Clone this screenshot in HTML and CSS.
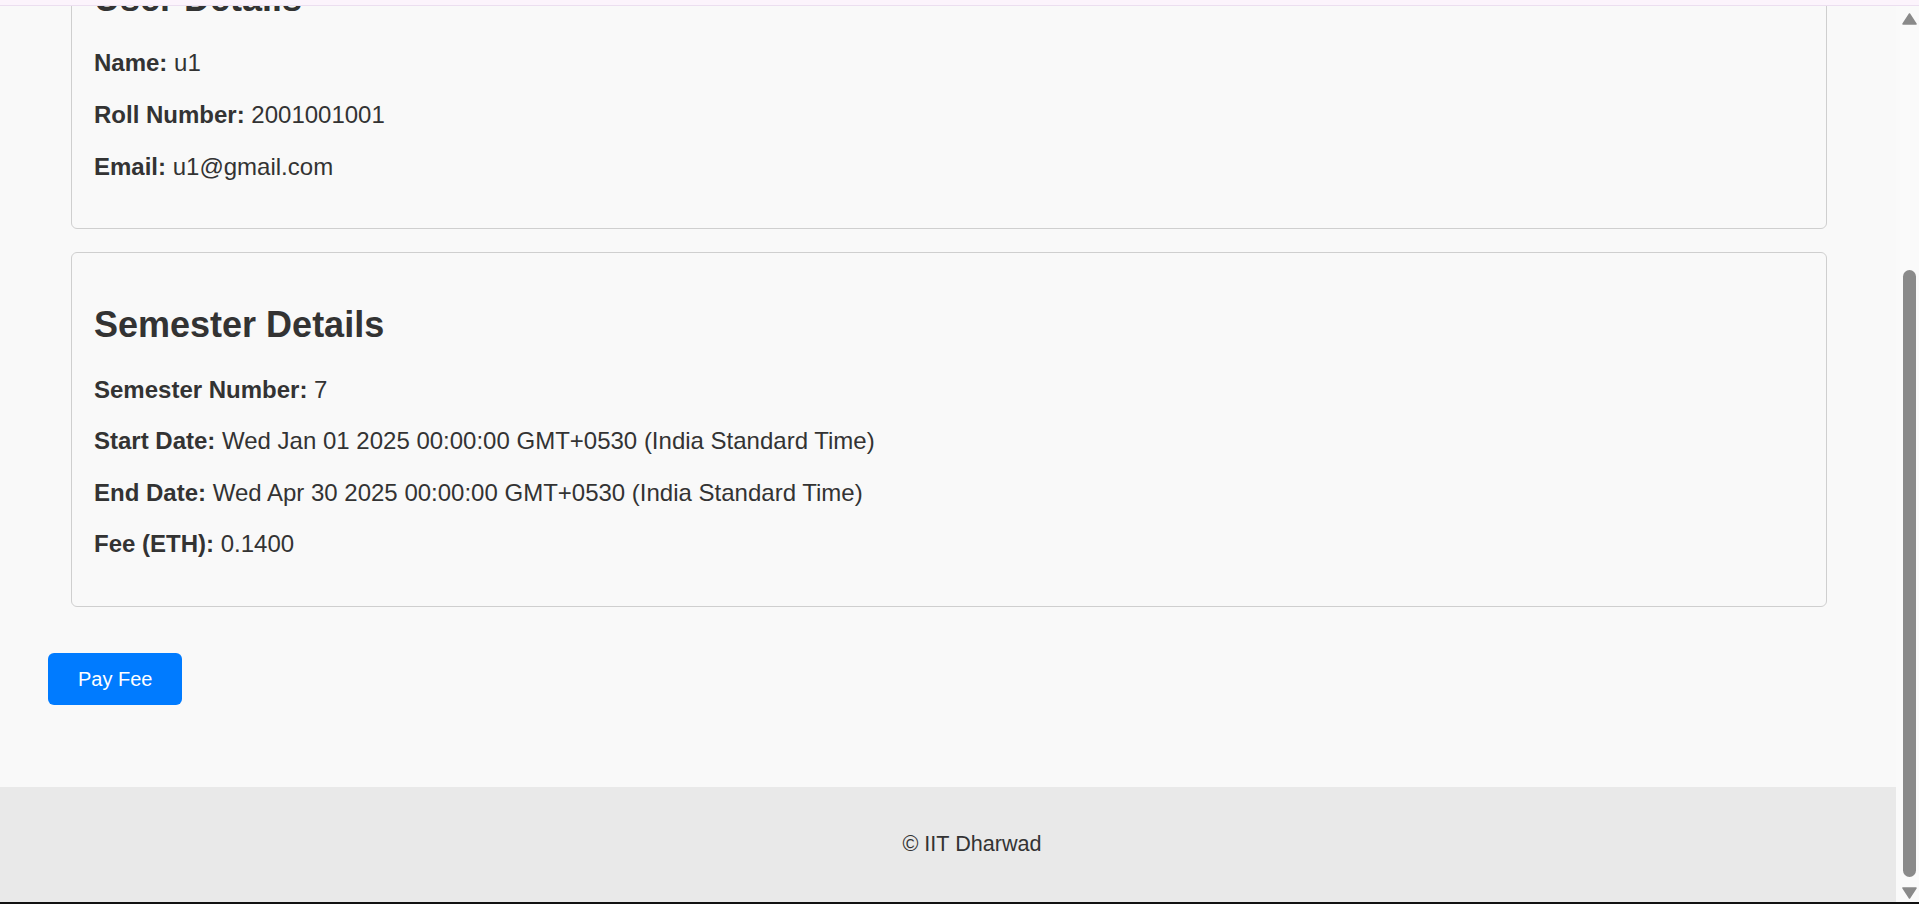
FILE: index.html
```html
<!DOCTYPE html>
<html lang="en">
<head>
<meta charset="utf-8">
<title>Student Fee Payment</title>
<link rel="stylesheet" href="styles.css">
</head>
<body>
  <div class="window">
    <div class="page">
      <main class="main">
        <section class="card card-first">
          <h2 class="card-title">User Details</h2>
          <p class="field"><strong>Name:</strong> u1</p>
          <p class="field"><strong>Roll Number:</strong> 2001001001</p>
          <p class="field"><strong>Email:</strong> u1@gmail.com</p>
        </section>
        <section class="card">
          <h2 class="card-title">Semester Details</h2>
          <p class="field"><strong>Semester Number:</strong> 7</p>
          <p class="field"><strong>Start Date:</strong> Wed Jan 01 2025 00:00:00 GMT+0530 (India Standard Time)</p>
          <p class="field"><strong>End Date:</strong> Wed Apr 30 2025 00:00:00 GMT+0530 (India Standard Time)</p>
          <p class="field"><strong>Fee (ETH):</strong> 0.1400</p>
        </section>
        <div class="actions">
          <button class="pay-btn" type="button">Pay Fee</button>
        </div>
      </main>
      <footer class="footer">
        <p class="footer-text">© IIT Dharwad</p>
      </footer>
    </div>
    <div class="scrollbar">
      <svg class="arrow" width="15" height="12" viewBox="0 0 15 12"><path d="M7.5 1 L14 11 L1 11 Z" fill="#8a8a8a" stroke="#8a8a8a" stroke-width="1.5" stroke-linejoin="round"/></svg>
      <div class="thumb"></div>
      <svg class="arrow arrow-down" width="15" height="12" viewBox="0 0 15 12"><path d="M1 1 L14 1 L7.5 11 Z" fill="#8a8a8a" stroke="#8a8a8a" stroke-width="1.5" stroke-linejoin="round"/></svg>
    </div>
  </div>
  <div class="topbar"></div>
  <div class="bottom-edge"></div>
</body>
</html>
```

FILE: styles.css
```css
* { box-sizing: border-box; }

html, body {
  margin: 0;
  padding: 0;
  height: 904px;
  overflow: hidden;
}

body {
  background: #f9f9f9;
  color: #333333;
  font-family: "Liberation Sans", Arial, sans-serif;
  display: flex;
  flex-direction: column;
  position: relative;
}

.topbar {
  position: absolute;
  top: 0;
  left: 0;
  right: 0;
  height: 6px;
  background: #fcf4fc;
  border-bottom: 1px solid #ecdff0;
}

.window {
  display: flex;
  height: 902px;
  overflow: hidden;
}

.page {
  flex: 0 0 1896px;
  display: flex;
  flex-direction: column;
  overflow: hidden;
}

.main {
  padding: 0 48px;
  margin-top: -74px;
}

.card {
  background: #f9f9f9;
  border: 1px solid #cfcfcf;
  border-radius: 6px;
  padding: 24px 22px;
  margin: 0 21px 23px 23px;
}

.card-title {
  font-size: 36px;
  font-weight: bold;
  margin: 27px 0 30px;
  line-height: 41.4px;
}

.field {
  font-size: 24px;
  margin: 24px 0;
  line-height: 27.6px;
}

.field:first-of-type { margin-top: 0; }

.field strong { font-weight: bold; }

.actions {
  margin-top: 46px;
  margin-bottom: 82px;
}

.pay-btn {
  background: #007bff;
  color: #ffffff;
  border: none;
  border-radius: 6px;
  font-family: "Liberation Sans", Arial, sans-serif;
  font-size: 20px;
  line-height: 22px;
  padding: 15px 30px;
  cursor: pointer;
}

.footer {
  background: #e9e9e9;
  padding: 45px 0 45px 48px;
  text-align: center;
  flex: 0 0 auto;
}

.footer-text {
  margin: 0;
  font-size: 21.6px;
  line-height: 24.8px;
}

.scrollbar {
  flex: 0 0 23px;
  background: #fafafa;
  display: flex;
  flex-direction: column;
  align-items: center;
  padding-top: 13px;
  padding-left: 3px;
}

.arrow { display: block; }

.thumb {
  width: 13px;
  height: 607px;
  margin-top: 245px;
  background: #8a8a8a;
  border-radius: 7px;
}

.arrow-down { margin-top: 10px; }

.bottom-edge {
  height: 2px;
  background: #111111;
}
```
